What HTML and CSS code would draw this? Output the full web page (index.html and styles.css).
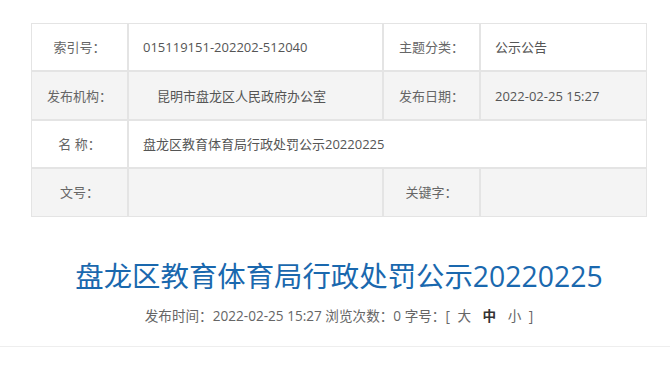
FILE: index.html
```html
<!DOCTYPE html>
<html lang="zh-CN">
<head>
<meta charset="utf-8">
<title>盘龙区教育体育局行政处罚公示20220225</title>
<link rel="stylesheet" href="styles.css">
</head>
<body>
<div class="page">
  <table class="info">
    <colgroup>
      <col class="c-label">
      <col class="c-value">
      <col class="c-label">
      <col class="c-value2">
    </colgroup>
    <tr>
      <td class="label">索引号：</td>
      <td class="value">015119151-202202-512040</td>
      <td class="label">主题分类：</td>
      <td class="value">公示公告</td>
    </tr>
    <tr class="alt">
      <td class="label">发布机构：</td>
      <td class="value"><span class="indent">昆明市盘龙区人民政府办公室</span></td>
      <td class="label">发布日期：</td>
      <td class="value">2022-02-25 15:27</td>
    </tr>
    <tr>
      <td class="label">名 称：</td>
      <td class="value" colspan="3">盘龙区教育体育局行政处罚公示20220225</td>
    </tr>
    <tr class="alt">
      <td class="label">文号：</td>
      <td class="value"></td>
      <td class="label">关键字：</td>
      <td class="value"></td>
    </tr>
  </table>

  <h1 class="title">盘龙区教育体育局行政处罚公示20220225</h1>
  <div class="meta">发布时间：2022-02-25 15:27 浏览次数：0 字号：[ <span class="size">大</span> <span class="size cur">中</span> <span class="size">小</span> ]</div>
</div>
<div class="rule"></div>
</body>
</html>
```

FILE: styles.css
```css
html, body {
  margin: 0;
  padding: 0;
  background: #fff;
}
body {
  font-family: "Open Sans", "Noto Sans CJK SC", sans-serif;
  color: #555;
}
.page {
  margin: 0 23px 0 31px;
  padding-top: 23px;
}
.info {
  width: 616px;
  table-layout: fixed;
  border-collapse: separate;
  border-spacing: 0;
  font-size: 13px;
}
.c-label { width: 97px; }
.c-value { width: 255px; }
.c-value2 { width: 167px; }
.info td {
  border: 1px solid #e4e4e4;
  height: 46.4px;
  padding: 0;
  line-height: 20px;
  vertical-align: middle;
}
.info tr.alt td {
  background: #f4f4f4;
}
.info td.label {
  text-align: center;
  color: #666;
}
.info td.value {
  padding-left: 14px;
  color: #555;
}
.indent {
  padding-left: 14px;
}
.title {
  margin: 39px 0 0;
  font-size: 28.4px;
  line-height: 40px;
  font-weight: normal;
  color: #1a68ae;
  text-align: center;
}
.meta {
  margin-top: 8px;
  font-size: 13.6px;
  line-height: 24px;
  color: #666;
  text-align: center;
}
.size {
  margin: 0 4px;
}
.size.cur {
  font-weight: bold;
  color: #333;
}
.rule {
  margin-top: 18px;
  border-top: 1px solid #eee;
}
```
